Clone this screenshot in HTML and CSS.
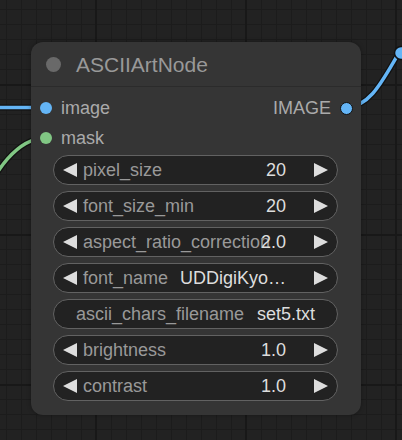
FILE: index.html
```html
<!DOCTYPE html>
<html>
<head>
<meta charset="utf-8">
<link rel="stylesheet" href="styles.css">
</head>
<body>
<div class="canvas">
  <svg class="wires" width="402" height="440" viewBox="0 0 402 440">
    <path class="wire-edge" d="M -10 107.5 L 46 107.5"/>
    <path class="wire blue" d="M -10 107.5 L 46 107.5"/>
    <path class="wire-edge" d="M -80 262 C -30 262, -12 138, 46 138"/>
    <path class="wire green" d="M -80 262 C -30 262, -12 138, 46 138"/>
    <path class="wire-edge" d="M 347 107 C 372 107, 385 75, 402 48"/>
    <path class="wire blue" d="M 347 107 C 372 107, 385 75, 402 48"/>
    <circle class="pin" cx="401" cy="53" r="6.5"/>
  </svg>

  <div class="node">
    <div class="title">
      <span class="title-dot"></span>
      <span class="title-text">ASCIIArtNode</span>
    </div>
    <div class="slots">
      <div class="slot-row">
        <div class="slot-in"><span class="dot dot-blue"></span><span class="slot-label">image</span></div>
        <div class="slot-out"><span class="slot-label">IMAGE</span><span class="dot dot-blue ring"></span></div>
      </div>
      <div class="slot-row">
        <div class="slot-in"><span class="dot dot-green"></span><span class="slot-label">mask</span></div>
      </div>
    </div>
    <div class="widgets">
      <div class="widget">
        <svg class="arrow" viewBox="0 0 14 14"><polygon points="14,0 0,7 14,14"/></svg>
        <span class="w-label">pixel_size</span>
        <span class="w-value">20</span>
        <svg class="arrow" viewBox="0 0 14 14"><polygon points="0,0 14,7 0,14"/></svg>
      </div>
      <div class="widget">
        <svg class="arrow" viewBox="0 0 14 14"><polygon points="14,0 0,7 14,14"/></svg>
        <span class="w-label">font_size_min</span>
        <span class="w-value">20</span>
        <svg class="arrow" viewBox="0 0 14 14"><polygon points="0,0 14,7 0,14"/></svg>
      </div>
      <div class="widget">
        <svg class="arrow" viewBox="0 0 14 14"><polygon points="14,0 0,7 14,14"/></svg>
        <span class="w-label">aspect_ratio_correction</span>
        <span class="w-value">2.0</span>
        <svg class="arrow" viewBox="0 0 14 14"><polygon points="0,0 14,7 0,14"/></svg>
      </div>
      <div class="widget">
        <svg class="arrow" viewBox="0 0 14 14"><polygon points="14,0 0,7 14,14"/></svg>
        <span class="w-label">font_name</span>
        <span class="w-value">UDDigiKyo…</span>
        <svg class="arrow" viewBox="0 0 14 14"><polygon points="0,0 14,7 0,14"/></svg>
      </div>
      <div class="widget widget-text">
        <span class="w-label">ascii_chars_filename</span>
        <span class="w-value">set5.txt</span>
      </div>
      <div class="widget">
        <svg class="arrow" viewBox="0 0 14 14"><polygon points="14,0 0,7 14,14"/></svg>
        <span class="w-label">brightness</span>
        <span class="w-value">1.0</span>
        <svg class="arrow" viewBox="0 0 14 14"><polygon points="0,0 14,7 0,14"/></svg>
      </div>
      <div class="widget">
        <svg class="arrow" viewBox="0 0 14 14"><polygon points="14,0 0,7 14,14"/></svg>
        <span class="w-label">contrast</span>
        <span class="w-value">1.0</span>
        <svg class="arrow" viewBox="0 0 14 14"><polygon points="0,0 14,7 0,14"/></svg>
      </div>
    </div>
  </div>
</div>
</body>
</html>
```
FILE: styles.css
```css
html, body {
  margin: 0;
  padding: 0;
  width: 402px;
  height: 440px;
  overflow: hidden;
}

.canvas {
  position: relative;
  width: 402px;
  height: 440px;
  background-color: #222222;
  background-image:
    linear-gradient(to right, #181818 2px, transparent 2px),
    linear-gradient(to bottom, #181818 2px, transparent 2px),
    linear-gradient(to right, #1c1c1c 1px, transparent 1px),
    linear-gradient(to bottom, #1c1c1c 1px, transparent 1px);
  background-size: 150px 150px, 150px 150px, 15px 15px, 15px 15px;
  background-position: 95px 0, 0 84px, 6px 0, 0 9px;
  font-family: "Liberation Sans", Arial, sans-serif;
}

.wires {
  position: absolute;
  left: 0;
  top: 0;
}

.wire-edge {
  fill: none;
  stroke: #111;
  stroke-width: 6;
}

.wire {
  fill: none;
  stroke-width: 3.5;
}

.blue { stroke: #64b5f6; }
.green { stroke: #81c784; }

.pin {
  fill: #64b5f6;
  stroke: #111;
  stroke-width: 1.5;
}

.node {
  position: absolute;
  left: 31px;
  top: 42px;
  width: 330px;
  box-sizing: border-box;
  background: #353535;
  border-radius: 12px;
  padding-bottom: 14px;
  box-shadow: 0 0 4px rgba(0, 0, 0, 0.35);
}

.title {
  height: 45px;
  box-sizing: border-box;
  border-bottom: 1px solid #2b2b2b;
  display: flex;
  align-items: center;
  padding-left: 15px;
  gap: 15px;
}

.title-dot {
  width: 15px;
  height: 15px;
  border-radius: 50%;
  background: #696969;
  flex: none;
}

.title-text {
  color: #999999;
  font-size: 21px;
  line-height: 1;
}

.slots {
  padding-top: 6px;
}

.slot-row {
  height: 30px;
  display: flex;
  align-items: center;
  justify-content: space-between;
}

.slot-in {
  display: flex;
  align-items: center;
  gap: 9px;
  padding-left: 9px;
}

.slot-out {
  display: flex;
  align-items: center;
  gap: 9px;
  padding-right: 8px;
}

.dot {
  width: 12px;
  height: 12px;
  border-radius: 50%;
  flex: none;
  box-sizing: border-box;
}

.dot-blue { background: #64b5f6; }
.dot-green { background: #81c784; }
.ring { border: 1.5px solid #111; width: 13px; height: 13px; }

.slot-label {
  color: #aaaaaa;
  font-size: 18px;
  line-height: 1;
}

.widgets {
  margin-top: 2px;
  padding: 0 23px 0 22px;
  display: flex;
  flex-direction: column;
  gap: 6px;
}

.widget {
  height: 30px;
  box-sizing: border-box;
  border: 1px solid #626262;
  border-radius: 15px;
  background: #222222;
  display: flex;
  align-items: center;
  padding: 0 9px;
  font-size: 18px;
  line-height: 1;
}

.arrow {
  width: 14px;
  height: 14px;
  flex: none;
  fill: #dddddd;
}

.w-label {
  color: #999999;
  margin-left: 6px;
  flex: 1 1 0;
  min-width: 0;
  white-space: nowrap;
}

.w-value {
  color: #dddddd;
  margin-right: 28px;
  white-space: nowrap;
  flex: none;
}

.widget-text {
  padding: 0 22px;
}

.widget-text .w-label {
  margin-left: 0;
}

.widget-text .w-value {
  margin-right: 0;
}
```
